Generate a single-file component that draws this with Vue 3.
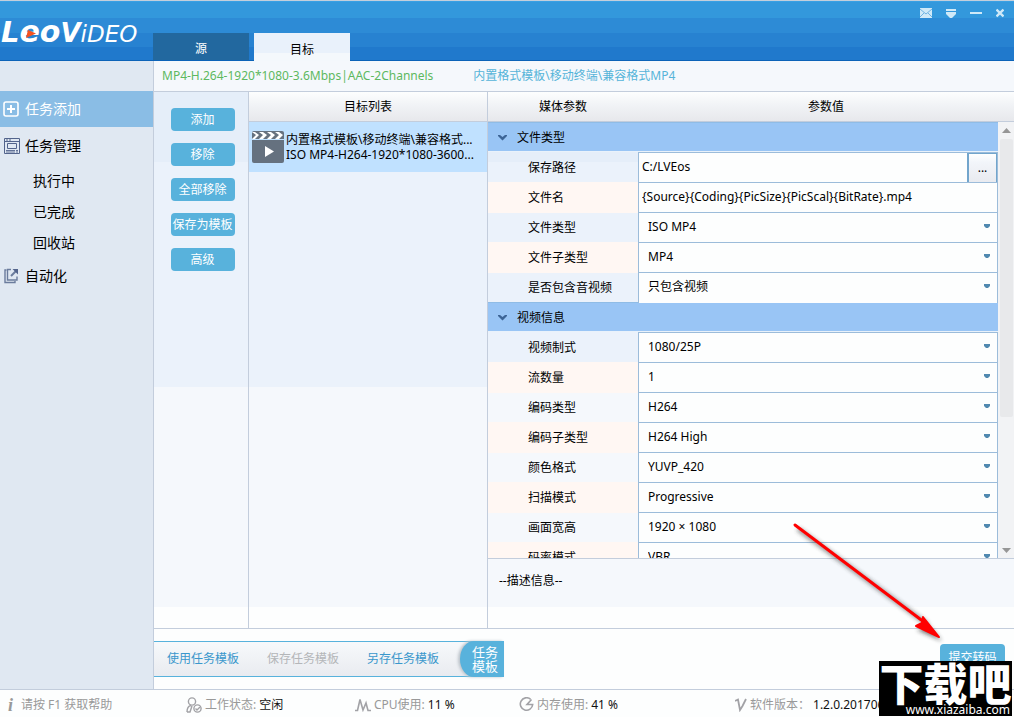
<script setup>
import { ref } from 'vue'

const actions = ['添加', '移除', '全部移除', '保存为模板', '高级']
const tasks = ['执行中', '已完成', '回收站']

const groups = ref([
  {
    title: '文件类型',
    rows: [
      { id: 'path', label: '保存路径', kind: 'path', value: 'C:/LVEos' },
      { id: 'name', label: '文件名', kind: 'text', value: '{Source}{Coding}{PicSize}{PicScal}{BitRate}.mp4' },
      { id: 'type', label: '文件类型', kind: 'select', value: 'ISO MP4' },
      { id: 'subtype', label: '文件子类型', kind: 'select', value: 'MP4' },
      { id: 'av', label: '是否包含音视频', kind: 'select', value: '只包含视频' }
    ]
  },
  {
    title: '视频信息',
    rows: [
      { id: 'standard', label: '视频制式', kind: 'select', value: '1080/25P' },
      { id: 'streams', label: '流数量', kind: 'select', value: '1' },
      { id: 'codec', label: '编码类型', kind: 'select', value: 'H264' },
      { id: 'profile', label: '编码子类型', kind: 'select', value: 'H264 High' },
      { id: 'color', label: '颜色格式', kind: 'select', value: 'YUVP_420' },
      { id: 'scan', label: '扫描模式', kind: 'select', value: 'Progressive' },
      { id: 'size', label: '画面宽高', kind: 'select', value: '1920 × 1080' },
      { id: 'rate', label: '码率模式', kind: 'select', value: 'VBR' }
    ]
  }
])
</script>

<template>
  <div class="app">
    <header class="top">
      <div class="logo" aria-label="LeoVideo">
        <span class="l1">L</span><span class="l2">eo</span><span class="l3">V</span><span class="l4">iDEO</span>
        <svg class="play" width="10" height="8" viewBox="0 0 10 8"><path d="M2 0L10 3.500L0 8Z" fill="#f4511e" /></svg>
      </div>
      <nav class="tabs">
        <button class="tab">源</button>
        <button class="tab on">目标</button>
      </nav>
      <div class="winbtns">
        <button aria-label="mail"><svg width="12" height="10" viewBox="0 0 12 10"><rect width="12" height="10" fill="#cfe9f8" /><path d="M0 1L6 6L12 1M0 9L4 5M12 9L8 5" fill="none" stroke="#6fb2e2" /></svg></button>
        <button aria-label="menu"><svg width="10" height="10" viewBox="0 0 10 10"><path d="M0 1H10V3H0ZM0 4H10V6L6 10H4L0 6Z" fill="#cfe9f8" /></svg></button>
        <button aria-label="minimize"><svg width="12" height="10" viewBox="0 0 12 10"><path d="M0 4H12V6H0Z" fill="#cfe9f8" /></svg></button>
        <button aria-label="close"><svg width="8" height="10" viewBox="0 0 8 10"><path d="M.5 1.500L7.500 8.500M7.500 1.500L.5 8.500" stroke="#cfe9f8" stroke-width="2.400" /></svg></button>
      </div>
    </header>

    <div class="body">
      <aside class="side">
        <a href="#" class="item on">
          <svg width="17" height="17" viewBox="0 0 17 17"><rect x="1" y="1" width="14" height="14" rx="2" fill="none" stroke="#fff" stroke-width="1.600" /><path d="M8 4V12M4 8H12" stroke="#fff" stroke-width="2" /></svg>
          任务添加
        </a>
        <a href="#" class="item second">
          <svg width="17" height="17" viewBox="0 0 17 17" fill="none" stroke="#53648c"><path d="M1.500 .5H16.500V15.500H1.500ZM1.500 3.500H16.500M3 2H5M6 2H8" /><path d="M4.500 5.500H13.500V10.500H4.500Z" /><path d="M3 12.500H12M3 14H12M13 12.500H15M13 14H15" stroke-width=".9" /></svg>
          任务管理
        </a>
        <div class="subs">
          <a v-for="t in tasks" :key="t" href="#">{{ t }}</a>
        </div>
        <a href="#" class="item">
          <svg width="17" height="17" viewBox="0 0 17 17" fill="none" stroke="#6b7c9d" stroke-width="1.400"><path d="M3.500 2H2V14.500H12V13" /><path d="M8 1.500H4.500V12H14V8.500" /><path d="M8 8L13 3" stroke-width="2" /><path d="M9.500 1H15V6.500Z" fill="#53648c" stroke="none" /></svg>
          自动化
        </a>
      </aside>

      <main class="main">
        <div class="crumbs">
          <span class="preset">MP4-H.264-1920*1080-3.6Mbps|AAC-2Channels</span>
          <span class="trail">内置格式模板\移动终端\兼容格式MP4</span>
        </div>

        <div class="work">
          <div class="acts">
            <button v-for="a in actions" :key="a" class="btn">{{ a }}</button>
          </div>

          <section class="list">
            <div class="head">目标列表</div>
            <div class="entry">
              <svg width="32" height="32" viewBox="0 0 32 32">
                <rect width="32" height="32" rx="2" fill="#65717f" />
                <path d="M0 1H3L7 4L3 8H0L4 4ZM7 1H11L15 4L11 8H7L11 4ZM15 1H19L23 4L19 8H15L19 4ZM23 1H27L31 4L27 8H23L27 4Z" fill="#fff" />
                <path d="M0 8H32V9H0Z" fill="#c0e1ff" />
                <path d="M13 15L22 20.500L13 26Z" fill="#fff" />
              </svg>
              <p>内置格式模板\移动终端\兼容格式...<br />ISO MP4-H264-1920*1080-3600...</p>
            </div>
          </section>

          <section class="params">
            <div class="head cols"><span>媒体参数</span><span>参数值</span></div>
            <div class="scroll">
              <div class="rows">
                <template v-for="g in groups" :key="g.title">
                  <button class="group">
                    <svg width="9" height="6" viewBox="0 0 9 6"><path d="M0 0H2L4.500 2L7 0H9V1L4.500 5.500L0 1Z" fill="#3c6496" /></svg>
                    {{ g.title }}
                  </button>
                  <div v-for="(r, i) in g.rows" :key="r.id" class="row" :class="{ warm: i % 2 }">
                    <label :for="r.id">{{ r.label }}</label>
                    <div class="cell">
                      <select v-if="r.kind === 'select'" :id="r.id"><option>{{ r.value }}</option></select>
                      <input v-else :id="r.id" v-model="r.value" type="text" />
                      <button v-if="r.kind === 'path'" class="more">...</button>
                      <svg v-if="r.kind === 'select'" class="caret" width="8" height="5" viewBox="0 0 8 5"><path d="M1 0H7V2L5 4H3L1 2Z" fill="#5189b0" /></svg>
                    </div>
                  </div>
                </template>
              </div>
              <div class="bar">
                <svg width="9" height="5" viewBox="0 0 9 5"><path d="M0 5L4.500 0L9 5Z" fill="#969696" /></svg>
                <div class="thumb"></div>
                <svg width="9" height="5" viewBox="0 0 9 5"><path d="M0 0L4.500 5L9 0Z" fill="#969696" /></svg>
              </div>
            </div>
            <div class="desc">--描述信息--</div>
          </section>
        </div>

        <div class="bottom">
          <div class="templates">
            <button>使用任务模板</button>
            <button disabled>保存任务模板</button>
            <button>另存任务模板</button>
            <strong>任务<br />模板</strong>
          </div>
          <button class="btn submit">提交转码</button>
        </div>
      </main>
    </div>

    <footer class="status">
      <span class="help"><i>i</i>请按 F1 获取帮助</span>
      <span>
        <svg width="16" height="16" viewBox="0 0 16 16" fill="none" stroke="#a2a2a6" stroke-width="1.400"><circle cx="6" cy="4.500" r="3.600" /><path d="M1 15C1 11 2.500 9 5 8.500M1 15H4L6 9" /><circle cx="11.500" cy="11.500" r="3.600" /><path d="M9.500 11.500L11 13L14 10" /></svg>
        工作状态: <b>空闲</b>
      </span>
      <span>
        <svg width="16" height="14" viewBox="0 0 16 14" fill="none" stroke="#a2a2a6" stroke-width="1.600"><path d="M0 12.500H2.500L5 1.500L8 12L11 5L13 12.500H16" /></svg>
        CPU使用: <b>11 %</b>
      </span>
      <span>
        <svg width="15" height="15" viewBox="0 0 15 15" fill="none" stroke="#a2a2a6" stroke-width="1.600"><path d="M11.500 2.200A6.200 6.200 0 1 0 13.700 7.500H8L12.500 2.500" /></svg>
        内存使用: <b>41 %</b>
      </span>
      <span>
        <svg width="12" height="14" viewBox="0 0 12 14" fill="none" stroke="#a2a2a6" stroke-width="1.800"><path d="M0 3L3 1.500L5 12L7.500 8L11 1" /></svg>
        软件版本：<b>1.2.0.201706</b>
      </span>
    </footer>

    <svg class="arrow" width="160" height="130" viewBox="0 0 160 130">
      <defs><filter id="soft" x="-10%" y="-10%" width="120%" height="120%"><feGaussianBlur stdDeviation="2" /></filter></defs>
      <g transform="translate(3 4)" opacity=".6" filter="url(#soft)"><path d="M5 4L134 99" stroke="#333" stroke-width="4" /><path d="M149 116L124 105L131 102L131 95Z" fill="#222" /></g>
      <path d="M5 4L134 101" stroke="#f00" stroke-width="3" stroke-linecap="round" />
      <path d="M149 116L126 105L132 102L133 96Z" fill="#f00" stroke="#f00" stroke-width="2" stroke-linejoin="round" />
    </svg>

    <div class="mark">
      <div class="big">下载吧</div>
      <div class="url">www.xiazaiba.com</div>
    </div>
  </div>
</template>

<style>
body {
  margin: 0;
  overflow: hidden;
}
</style>

<style scoped>
.app {
  position: relative;
  display: flex;
  flex-direction: column;
  height: 100vh;
  overflow: hidden;
  background: #fdfefe;
  color: #000;
  font-family: "Noto Sans", "Noto Sans CJK SC", sans-serif;
  font-size: 12px;
  line-height: 16px;
}
* {
  box-sizing: border-box;
}
button,
input,
select {
  margin: 0;
  padding: 0;
  border: 0;
  border-radius: 0;
  background: none;
  color: inherit;
  font: inherit;
}
a {
  color: inherit;
  text-decoration: none;
}
svg {
  display: block;
  flex: none;
}

.top {
  flex: none;
  display: flex;
  height: 61px;
  border-top: 1px solid #c4cfdb;
  border-bottom: 1px solid #0c63b8;
  background: linear-gradient(#38a0e4 0 1px, #3398dc 1px 17px, #2d8bd6 17px 32px, #2782d1 32px 46px, #2079cc 46px);
}
.logo {
  position: relative;
  display: flex;
  align-items: baseline;
  width: 153px;
  padding: 12px 0 0 1px;
  color: #fff;
  font-family: "DejaVu Sans", sans-serif;
  font-style: italic;
  font-weight: bold;
  line-height: 38px;
}
.l1 { font-size: 29px; }
.l2 { font-size: 30px; }
.l3 { font-size: 26px; }
.l4 { font-size: 23px; font-weight: normal; }
.play {
  position: absolute;
  left: 26px;
  top: 29px;
}
.tabs {
  display: flex;
  align-items: flex-end;
  gap: 5px;
}
.tab {
  width: 96px;
  height: 27px;
  padding-top: 5px;
  background: #22689f;
  color: #fff;
}
.tab.on {
  margin-bottom: -1px;
  height: 28px;
  background: linear-gradient(#e9f1fb 0 70%, #f4f8fc 70%);
  color: #000;
}
.winbtns {
  display: flex;
  align-items: flex-start;
  gap: 14px;
  margin-left: auto;
  padding: 7px 10px 0 0;
}

.body {
  flex: 1;
  display: flex;
  min-height: 0;
}
.side {
  flex: none;
  width: 154px;
  padding-top: 30px;
  border-right: 1px solid #c3cddc;
  background: #e0e8f2;
  font-size: 14px;
}
.item {
  display: flex;
  align-items: center;
  gap: 5px;
  height: 36px;
  padding-left: 3px;
}
.item.on {
  background: #8abde5;
  color: #fff;
}
.item.second {
  height: 38px;
}
.subs a {
  display: block;
  padding-left: 33px;
  line-height: 31px;
}

.main {
  flex: 1;
  display: flex;
  flex-direction: column;
  min-width: 0;
}
.crumbs {
  flex: none;
  display: flex;
  gap: 40px;
  height: 31px;
  padding-left: 8px;
  border-bottom: 1px solid #c3cddc;
  background: #f5f8fc;
  line-height: 30px;
}
.preset { color: #5db85f; }
.trail { color: #55b4d9; }
.work {
  flex: 1;
  display: flex;
  min-height: 0;
  border-bottom: 1px solid #c3cddc;
  background: linear-gradient(#e5eef9 0 13%, #ebf2fb 13% 55%, #f5f8fc 55% 96%, #fdfefe 96%);
}
.acts {
  flex: none;
  display: flex;
  flex-direction: column;
  align-items: center;
  gap: 12px;
  width: 95px;
  padding: 16px 0 0 3px;
  border-right: 1px solid #c3cddc;
}
.btn {
  width: 64px;
  height: 23px;
  border-radius: 4px;
  background: #58b2dc;
  color: #fff;
  white-space: nowrap;
}
.list {
  flex: none;
  width: 239px;
  border-right: 1px solid #c3cddc;
}
.head {
  flex: none;
  height: 30px;
  border-bottom: 1px solid #c3cddc;
  background: linear-gradient(#fdfefe, #f1f3f6 45%, #e7e8ec);
  line-height: 30px;
  text-align: center;
}
.entry {
  display: flex;
  align-items: center;
  gap: 2px;
  height: 50px;
  padding-left: 3px;
  background: #c0e1ff;
}
.entry p {
  margin: 0;
  line-height: 15px;
  white-space: nowrap;
}
.params {
  flex: 1;
  display: flex;
  flex-direction: column;
  min-width: 0;
}
.cols {
  display: grid;
  grid-template-columns: 150px 1fr;
}
.scroll {
  flex: 1;
  display: flex;
  min-height: 0;
  overflow: hidden;
}
.rows {
  flex: 1;
  min-width: 0;
}
.group {
  display: flex;
  align-items: center;
  gap: 10px;
  width: 100%;
  height: 30px;
  padding: 2px 0 0 10px;
  border-top: 1px solid #8fbce6;
  border-bottom: 1px solid #e9f2fb;
  background: #99c5f5;
}
.row {
  display: grid;
  grid-template-columns: 150px 1fr;
  height: 30px;
}
.row label {
  padding-left: 40px;
  line-height: 31px;
}
.warm label {
  background: #fff7f3;
}
.cell {
  position: relative;
  display: flex;
  border: solid #9cbcda;
  border-width: 1px 1px 0 1px;
  background: #fdfefe;
}
.cell input,
.cell select {
  flex: 1;
  min-width: 0;
  padding: 0 0 2px 3px;
  appearance: none;
  outline: 0;
}
.cell select {
  padding-left: 9px;
}
.caret {
  position: absolute;
  right: 6px;
  top: 11px;
  pointer-events: none;
}
.more {
  width: 30px;
  border: 1px solid #72a5cc;
  border-left-width: 2px;
  background: linear-gradient(#fff, #f2f5fa 30%, #e9ebf0);
}
.bar {
  flex: none;
  display: flex;
  flex-direction: column;
  align-items: center;
  width: 16px;
  padding: 6px 0 5px;
  background: #f2f3f5;
}
.thumb {
  flex: none;
  width: 13px;
  height: 278px;
  margin: 6px 0 auto 1px;
  border-radius: 2px;
  background: #e8e9eb;
}
.desc {
  flex: none;
  height: 70px;
  padding: 14px 11px;
  border-top: 1px solid #c3cddc;
}

.bottom {
  flex: none;
  display: flex;
  justify-content: space-between;
  align-items: flex-start;
  height: 60px;
  padding: 12px 9px 0 0;
}
.templates {
  display: flex;
  align-items: center;
  gap: 28px;
  height: 36px;
  padding-left: 13px;
  border: solid #58b2dc;
  border-width: 1px 0;
  background: linear-gradient(#f7f9fb, #e9ebf0);
  color: #3a97cc;
}
.templates button:disabled {
  color: #b4b6b9;
}
.templates strong {
  width: 44px;
  height: 36px;
  margin-left: -7px;
  padding: 4px 6px 0 0;
  border-radius: 14px 0 0 14px / 18px 0 0 18px;
  background: #58b2dc;
  box-shadow: -2px 0 3px #bcc3ca;
  color: #fff;
  font-size: 13px;
  font-weight: normal;
  line-height: 14px;
  text-align: right;
}
.submit {
  width: 65px;
  height: 27px;
  margin-top: 3px;
}

.status {
  flex: none;
  display: grid;
  grid-template-columns: 178fr 169fr 164fr 216fr 279fr;
  align-items: center;
  height: 28px;
  padding: 2px 0 0 8px;
  border-top: 1px solid #c3cddc;
  color: #999;
}
.status span {
  display: flex;
  align-items: center;
  gap: 3px;
  white-space: nowrap;
}
.status b {
  color: #111;
  font-weight: normal;
}
.help i {
  width: 10px;
  font-family: "Liberation Serif", serif;
  font-size: 18px;
  font-weight: bold;
}

.arrow {
  position: absolute;
  right: 64px;
  bottom: 66px;
  pointer-events: none;
}
.mark {
  position: absolute;
  right: 2px;
  bottom: 1px;
  width: 133px;
  height: 55px;
  overflow: hidden;
  background: #000;
  color: #fff;
  text-align: center;
}
.big {
  font-family: "Noto Sans CJK SC", sans-serif;
  font-size: 44px;
  font-weight: 900;
  line-height: 42px;
}
.url {
  padding-right: 2px;
  font-size: 12px;
  line-height: 13px;
  text-align: right;
}
</style>
